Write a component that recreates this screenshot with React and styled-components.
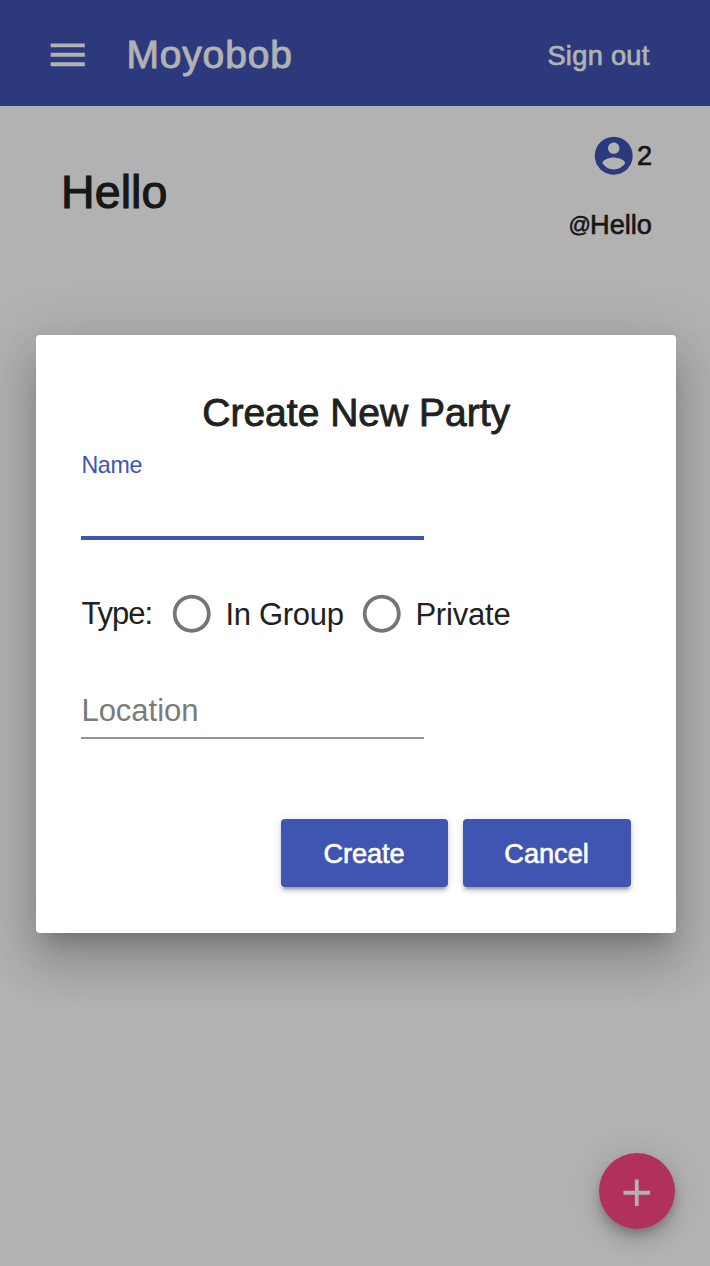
import React from "react";
import styled, { createGlobalStyle } from "styled-components";

const GlobalStyle = createGlobalStyle`
  *, *::before, *::after { box-sizing: border-box; }
  body {
    margin: 0;
    overflow: hidden;
    background: #fff;
    font-family: "Liberation Sans", Arial, Helvetica, sans-serif;
    color: #212121;
  }
`;

const Screen = styled.div`
  position: relative;
  width: 710px;
  height: 1266px;
  overflow: hidden;
  background: #fff;
`;

const Text = styled.span`
  display: block;
  white-space: nowrap;
  font-size: ${(p) => p.$size}px;
  line-height: ${(p) => p.$line || 40}px;
  letter-spacing: ${(p) => p.$spacing || 0}px;
  -webkit-text-stroke: ${(p) => (p.$medium ? p.$size * 0.023 : 0)}px currentColor;
`;

const AppBar = styled.header`
  display: flex;
  align-items: center;
  height: 106px;
  padding: 4px 60.4px 0 45.3px;
  background: #4054b4;
  color: #fff;

  > ${Text} { padding-top: 2px; }
`;

const Brand = styled.div`
  flex: 1;
  padding-left: 35.6px;
`;

const Icon = styled.svg`
  display: block;
  flex: none;
  width: 45.5px;
  height: 45.5px;
  fill: currentColor;
`;

const PartyRow = styled.section`
  display: flex;
  justify-content: space-between;
  padding: 27px 58px 0 61px;
`;

const PartyName = styled.div`
  padding-top: 29px;
`;

const PartyMeta = styled.div`
  display: flex;
  flex-direction: column;
  align-items: flex-end;
  gap: 27px;
`;

const MemberCount = styled.div`
  display: flex;
  align-items: center;
  height: 45px;

  ${Icon} { color: #4054b4; }
  ${Text} { padding-top: 1px; }
`;

const Handle = styled.div`
  display: flex;
  align-items: center;
`;

const Fab = styled.button`
  position: absolute;
  right: 35.5px;
  bottom: 37px;
  display: flex;
  align-items: center;
  justify-content: center;
  width: 76px;
  height: 76px;
  padding: 4px 0 0;
  border: 0;
  border-radius: 50%;
  background: #ff4684;
  color: #fff;
  box-shadow: 0 5.7px 9.5px -1.9px rgba(0, 0, 0, 0.2),
    0 11.4px 19px 0 rgba(0, 0, 0, 0.14), 0 1.9px 34px 0 rgba(0, 0, 0, 0.12);
`;

const Overlay = styled.div`
  position: absolute;
  inset: 0;
  padding: 334.5px 33.7px 0 36px;
  background: rgba(0, 0, 0, 0.3);
`;

const Dialog = styled.form`
  display: flex;
  flex-direction: column;
  height: 598.5px;
  padding: 45.5px 45.4px 45.6px;
  border-radius: 4px;
  background: #fff;
  box-shadow: 0 15px 19px -9.5px rgba(0, 0, 0, 0.2),
    0 30px 45.4px 3.8px rgba(0, 0, 0, 0.14), 0 11.4px 57px 9.5px rgba(0, 0, 0, 0.12);
`;

const DialogTitle = styled.div`
  display: flex;
  justify-content: center;
`;

const Field = styled.label`
  display: block;
  width: 342.5px;
  height: ${(p) => p.$height}px;
  padding-top: ${(p) => (p.$focused ? 0 : 1.5)}px;
  border-bottom: ${(p) => (p.$focused ? "4px solid #4054b4" : "2px solid #949494")};
  color: ${(p) => (p.$focused ? "#4054b4" : "#7b7b7b")};
`;

const TypeRow = styled.div`
  display: flex;
  align-items: center;
  height: 46px;
  margin: 51px 0 52.5px;
`;

const TypeLabel = styled.div`
  width: 87.5px;
`;

const RadioOption = styled.div`
  display: flex;
  align-items: center;
  width: 190px;

  ${Icon} { color: #757575; margin-right: 11px; }
  ${Text} { padding-top: 3px; }
`;

const Actions = styled.div`
  display: flex;
  justify-content: flex-end;
  gap: 15px;
  margin-top: auto;
`;

const ActionButton = styled.button`
  display: flex;
  align-items: center;
  justify-content: center;
  width: 167.5px;
  height: 68.2px;
  padding: 1.5px 1.2px 0 0;
  border: 0;
  border-radius: 4px;
  background: #4054b2;
  color: #fff;
  font-family: inherit;
  box-shadow: 0 5.7px 1.9px -3.8px rgba(0, 0, 0, 0.2),
    0 3.8px 3.8px 0 rgba(0, 0, 0, 0.14), 0 1.9px 9.5px 0 rgba(0, 0, 0, 0.12);
`;

const paths = {
  menu: "M3 18h18v-2H3v2zm0-5h18v-2H3v2zm0-7v2h18V6H3z",
  account:
    "M12 2C6.48 2 2 6.48 2 12s4.48 10 10 10 10-4.48 10-10S17.52 2 12 2zm0 3c1.66 0 3 1.34 3 3s-1.34 3-3 3-3-1.34-3-3 1.34-3 3-3zm0 14.2c-2.5 0-4.71-1.28-6-3.22.03-1.99 4-3.08 6-3.08 1.99 0 5.97 1.09 6 3.08-1.29 1.94-3.5 3.22-6 3.22z",
  add: "M19 13h-6v6h-2v-6H5v-2h6V5h2v6h6v2z",
  radio:
    "M12 2C6.48 2 2 6.48 2 12s4.48 10 10 10 10-4.48 10-10S17.52 2 12 2zm0 18c-4.42 0-8-3.58-8-8s3.58-8 8-8 8 3.58 8 8-3.58 8-8 8z",
};

const Glyph = ({ name }) => (
  <Icon viewBox="0 0 24 24" aria-hidden="true">
    <path d={paths[name]} />
  </Icon>
);

const Radio = ({ label, spacing }) => (
  <RadioOption role="radio" aria-checked="false">
    <Glyph name="radio" />
    <Text $size={31} $spacing={spacing}>{label}</Text>
  </RadioOption>
);

export default function App() {
  return (
    <>
      <GlobalStyle />
      <Screen>
        <AppBar>
          <Glyph name="menu" />
          <Brand>
            <Text $size={39} $spacing={0.85} $medium>Moyobob</Text>
          </Brand>
          <Text $size={27.2} $spacing={0.3} $medium>Sign out</Text>
        </AppBar>

        <PartyRow>
          <PartyName>
            <Text $size={46.5} $line={60} $spacing={0.1} $medium>Hello</Text>
          </PartyName>
          <PartyMeta>
            <MemberCount>
              <Glyph name="account" />
              <Text $size={27.2} $line={42} $medium>2</Text>
            </MemberCount>
            <Handle>
              <Text $size={22} $line={38} $spacing={-0.8} $medium>@</Text>
              <Text $size={27.2} $medium>Hello</Text>
            </Handle>
          </PartyMeta>
        </PartyRow>

        <Fab type="button" aria-label="Add">
          <Glyph name="add" />
        </Fab>

        <Overlay>
          <Dialog>
            <DialogTitle>
              <Text $size={39} $line={66} $medium>Create New Party</Text>
            </DialogTitle>
            <Field $focused $height={93.5}>
              <Text $size={23.2} $line={39} $spacing={-0.3}>Name</Text>
            </Field>
            <TypeRow>
              <TypeLabel>
                <Text $size={31} $spacing={-1}>Type:</Text>
              </TypeLabel>
              <Radio label="In Group" spacing={-0.3} />
              <Radio label="Private" spacing={-0.2} />
            </TypeRow>
            <Field $height={50}>
              <Text $size={31}>Location</Text>
            </Field>
            <Actions>
              <ActionButton type="button">
                <Text $size={27.2} $spacing={-0.1} $medium>Create</Text>
              </ActionButton>
              <ActionButton type="button">
                <Text $size={27.2} $medium>Cancel</Text>
              </ActionButton>
            </Actions>
          </Dialog>
        </Overlay>
      </Screen>
    </>
  );
}
